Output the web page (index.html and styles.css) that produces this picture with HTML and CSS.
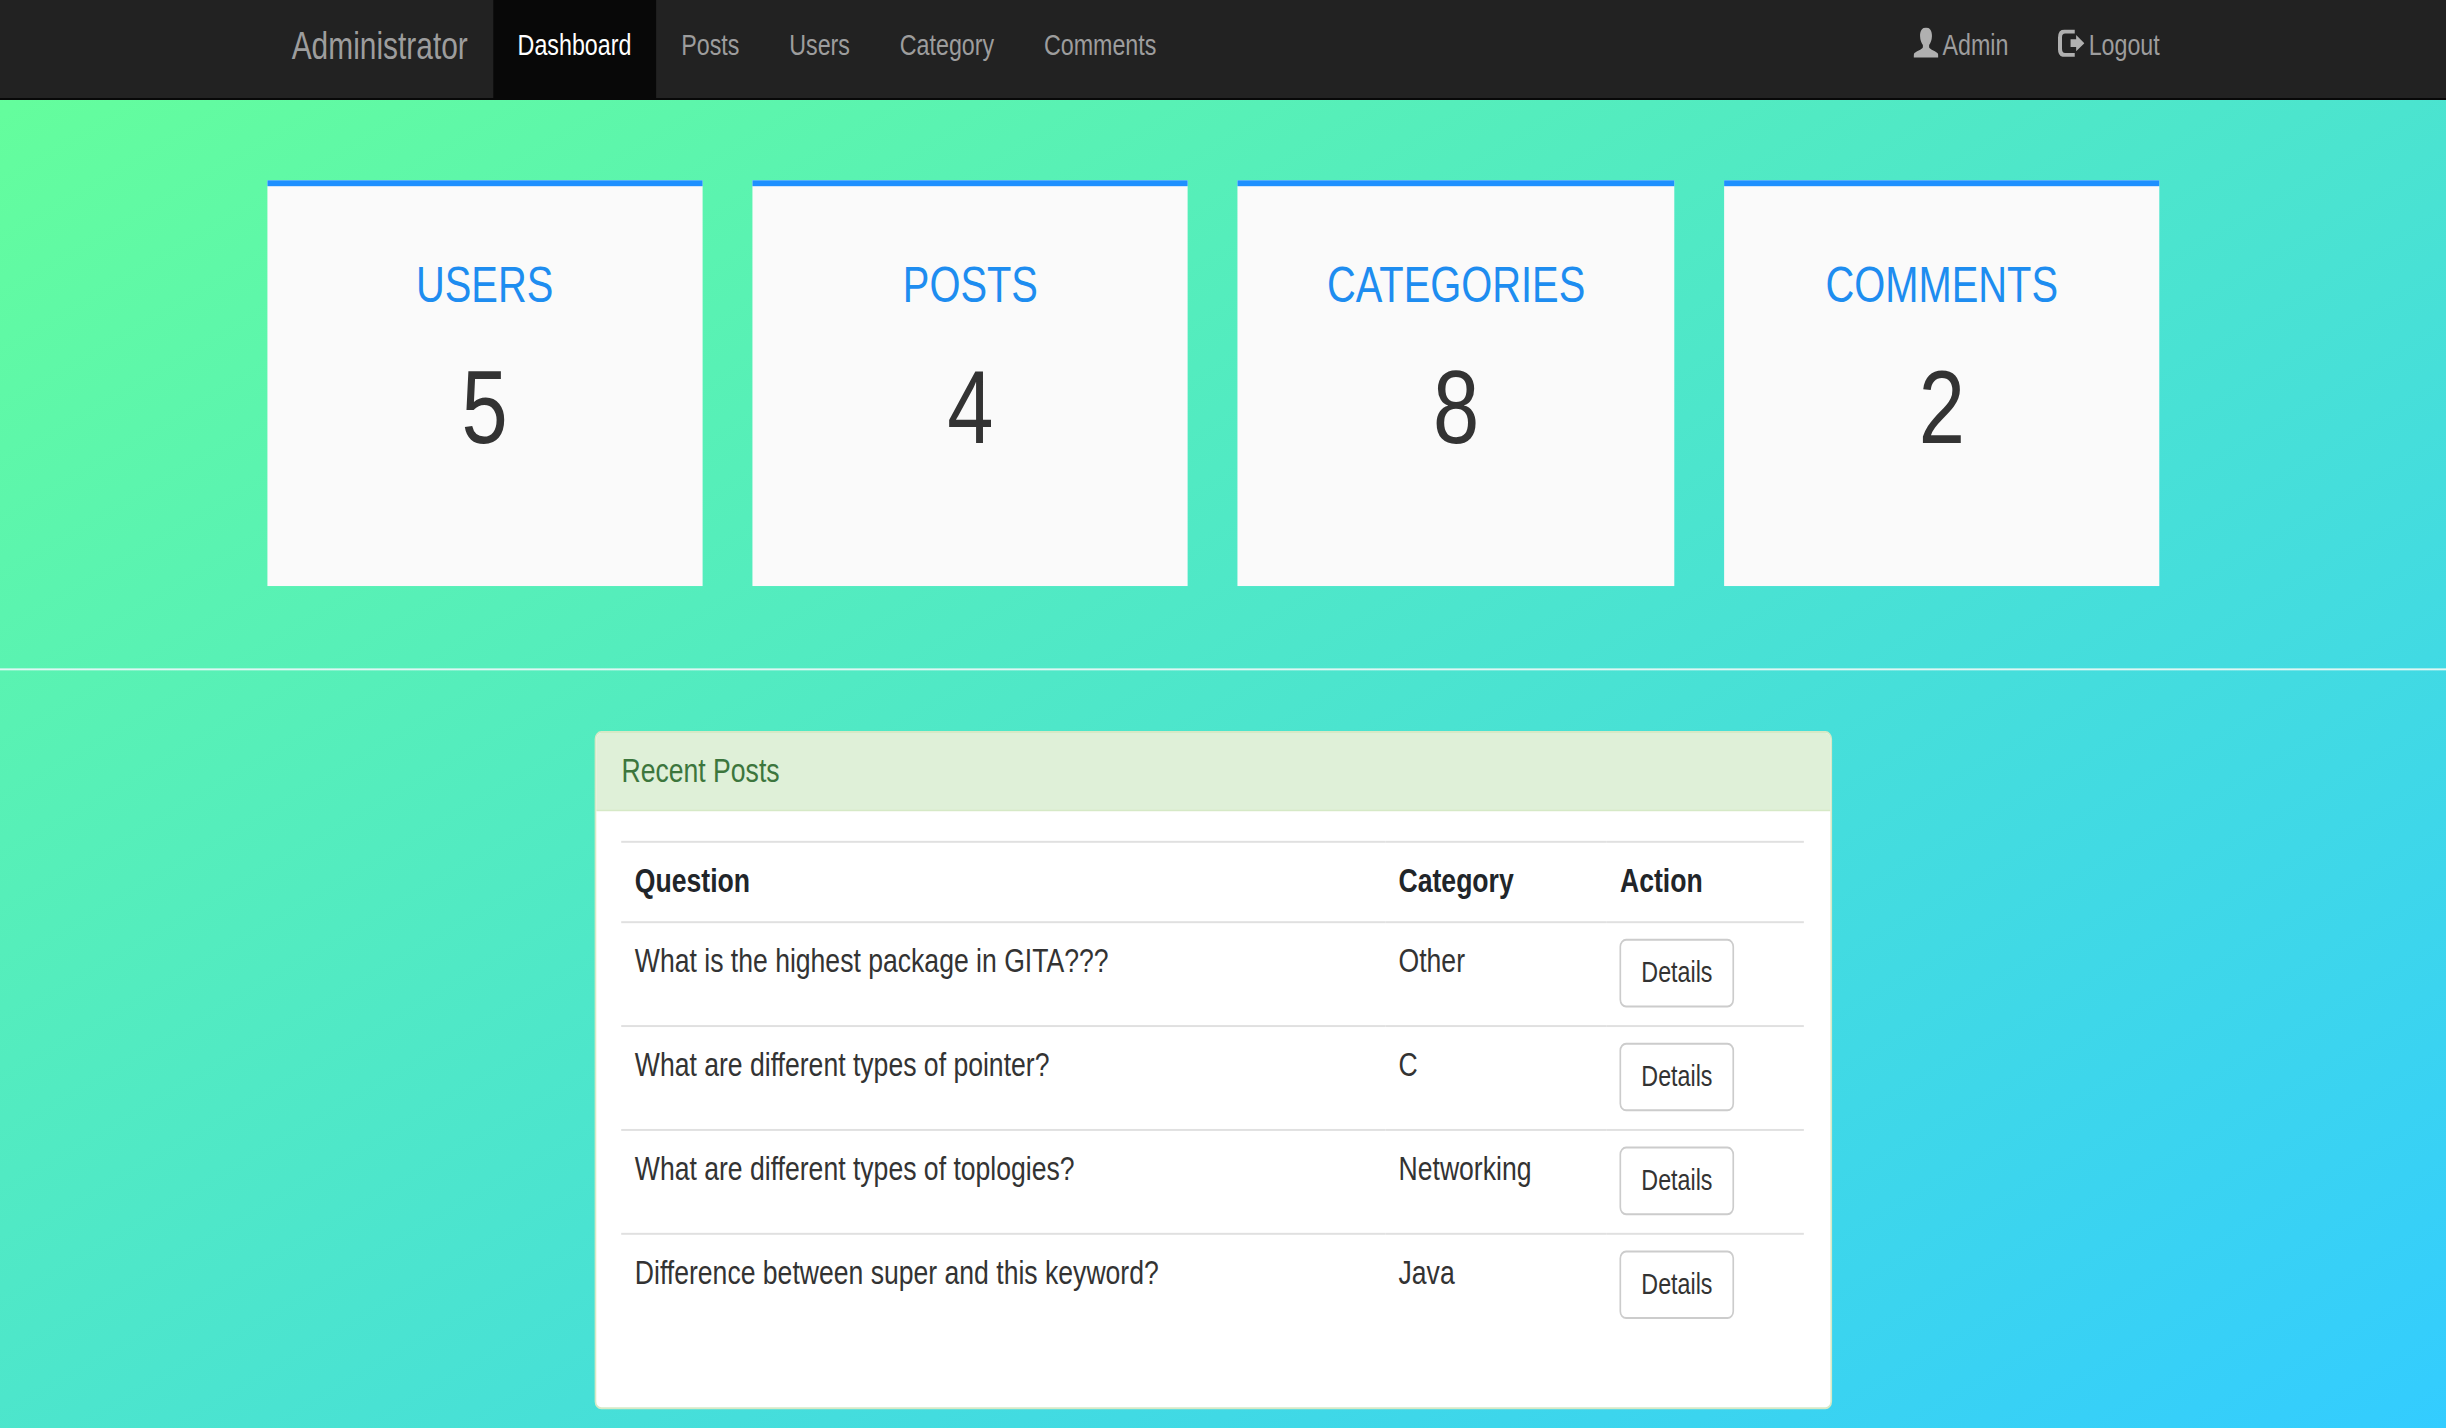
FILE: index.html
```html
<!DOCTYPE html>
<html lang="en">
<head>
<meta charset="utf-8">
<title>Dashboard</title>
<link rel="stylesheet" href="styles.css">
</head>
<body>
<div class="page">
  <nav class="navbar">
    <div class="container navbar-inner">
      <a class="brand"><span class="tall">Administrator</span></a>
      <ul class="nav">
        <li class="nav-item active"><span class="tall">Dashboard</span></li>
        <li class="nav-item"><span class="tall">Posts</span></li>
        <li class="nav-item"><span class="tall">Users</span></li>
        <li class="nav-item"><span class="tall">Category</span></li>
        <li class="nav-item"><span class="tall">Comments</span></li>
      </ul>
      <ul class="nav nav-right">
        <li class="nav-item"><svg class="icon" viewBox="0 0 16 14" preserveAspectRatio="none"><path d="M8 0C10.3 0 11.9 1.6 11.8 4C11.7 6 11 7.2 10 8.2V9.3C10 10.2 15.2 11.4 15.7 12.4C15.9 12.8 15.9 13.3 15.9 14H.1C.1 13.3 .1 12.8 .3 12.4C.8 11.4 6 10.2 6 9.3V8.2C5 7.2 4.3 6 4.2 4C4.1 1.6 5.7 0 8 0Z"/></svg><span class="tall">Admin</span></li>
        <li class="nav-item"><svg class="icon icon-out" viewBox="0 0 17 14" preserveAspectRatio="none"><path d="M10.8 0V2.1H4.6Q2.6 2.1 2.6 4V9.8Q2.6 11.9 4.6 11.9H10.8V14H4.2Q0 14 0 9.8V4.2Q0 0 4.2 0Z"/><path d="M8.1 4.9H11.7V2.8L17 7L11.7 11V8.9H8.1Z"/></svg><span class="tall">Logout</span></li>
      </ul>
    </div>
  </nav>
  <main>
    <section class="container cards">
      <div class="card"><h2 class="card-title">USERS</h2><p class="card-count">5</p></div>
      <div class="card"><h2 class="card-title">POSTS</h2><p class="card-count">4</p></div>
      <div class="card"><h2 class="card-title">CATEGORIES</h2><p class="card-count">8</p></div>
      <div class="card"><h2 class="card-title">COMMENTS</h2><p class="card-count">2</p></div>
    </section>
    <hr class="divider">
    <section class="panel">
      <div class="panel-heading"><span class="tall">Recent Posts</span></div>
      <div class="panel-body">
        <table class="table">
          <colgroup><col class="col-question"><col class="col-category"><col></colgroup>
          <thead><tr><th><span class="tall">Question</span></th><th><span class="tall">Category</span></th><th><span class="tall">Action</span></th></tr></thead>
          <tbody>
            <tr><td><span class="tall">What is the highest package in GITA???</span></td><td><span class="tall">Other</span></td><td><button class="btn"><span class="tall">Details</span></button></td></tr>
            <tr><td><span class="tall">What are different types of pointer?</span></td><td><span class="tall">C</span></td><td><button class="btn"><span class="tall">Details</span></button></td></tr>
            <tr><td><span class="tall">What are different types of toplogies?</span></td><td><span class="tall">Networking</span></td><td><button class="btn"><span class="tall">Details</span></button></td></tr>
            <tr><td><span class="tall">Difference between super and this keyword?</span></td><td><span class="tall">Java</span></td><td><button class="btn"><span class="tall">Details</span></button></td></tr>
          </tbody>
        </table>
      </div>
    </section>
  </main>
</div>
</body>
</html>
```
FILE: styles.css
```css
* { box-sizing: border-box; }
html, body { margin: 0; height: 100%; overflow: hidden; }
body { font: 16px/1.5 "Liberation Sans", Arial, sans-serif; color: #333; }

.page {
  width: 1472.6px;
  height: 728.6px;
  transform: scale(1.661, 1.96);
  transform-origin: 0 0;
  background: linear-gradient(to bottom right, #66ff99 0%, #33ccff 100%);
}
.container { width: 1139.7px; margin-left: 160.6px; }

/* Taller letterforms, stretched up from the baseline. */
.tall { display: inline-block; transform: scaleY(1.08); transform-origin: 0 73%; }

.navbar { height: 51px; background: #222; border-bottom: 1px solid #080808; }
.navbar-inner { display: flex; height: 50px; }
.brand { padding: 15.3px 15px 0; font-size: 18px; line-height: 18px; color: #9d9d9d; }
.nav { display: flex; margin: 0; padding: 0; list-style: none; }
.nav-item { display: flex; height: 50px; padding: 14px 15px 0; font-size: 14px; line-height: 21px; color: #9d9d9d; }
.nav-item.active { background: #080808; color: #fff; }
.nav-right { margin-left: auto; margin-right: -15px; }
.icon { width: 15.1px; height: 15.3px; margin: 0.3px 2.6px 0 0; fill: #b0b0b0; }
.nav-right .nav-item:first-child { margin-right: -0.5px; }
.icon-out { width: 15.9px; height: 14.2px; margin: 1.2px 2.9px 0 0; }

.cards { display: flex; justify-content: space-between; margin-top: 41.2px; }
.card { width: 262.4px; height: 206.8px; padding-top: 35.2px; background: #fafafa; border-top: 3px solid #1e90ff; text-align: center; }
.card-title { margin: 0; font-size: 24px; font-weight: 400; line-height: 32px; color: #1e8df0; transform: scaleY(1.07); transform-origin: 0 76%; }
.card-count { margin: 16.6px 0 0; font-size: 50px; line-height: 60px; transform: scaleY(1.06); transform-origin: 0 78%; }

.divider { height: 1px; margin: 41.7px 0 30.9px; border: 0; background: #dff8f4; }

.panel { width: 744.4px; height: 346.3px; margin-left: 358.2px; background: #fff; border: 1px solid #d6e9c6; border-radius: 4px; }
.panel-heading { height: 40.6px; padding: 8.6px 15px 0; font-size: 16px; line-height: 24px; color: #3c763d; background: #dff0d8; border-bottom: 1px solid #d6e9c6; border-radius: 3px 3px 0 0; }
.panel-body { padding: 15px 15px 0; }
.table { width: 712px; table-layout: fixed; border-collapse: separate; border-spacing: 0; }
.col-question { width: 459.8px; }
.col-category { width: 133.3px; }
.table th, .table td { padding: 8px 8px 0; border-top: 1px solid #e0e0e0; text-align: left; vertical-align: top; line-height: 24px; white-space: nowrap; }
.table th { height: 40.6px; color: #212529; }
.table td { height: 53px; }
.btn { display: block; width: 68.6px; height: 35.4px; margin: 0; padding: 0; font: 14px/21px "Liberation Sans", Arial, sans-serif; color: #333; background: #fff; border: 1px solid #ccc; border-radius: 4px; }
```
